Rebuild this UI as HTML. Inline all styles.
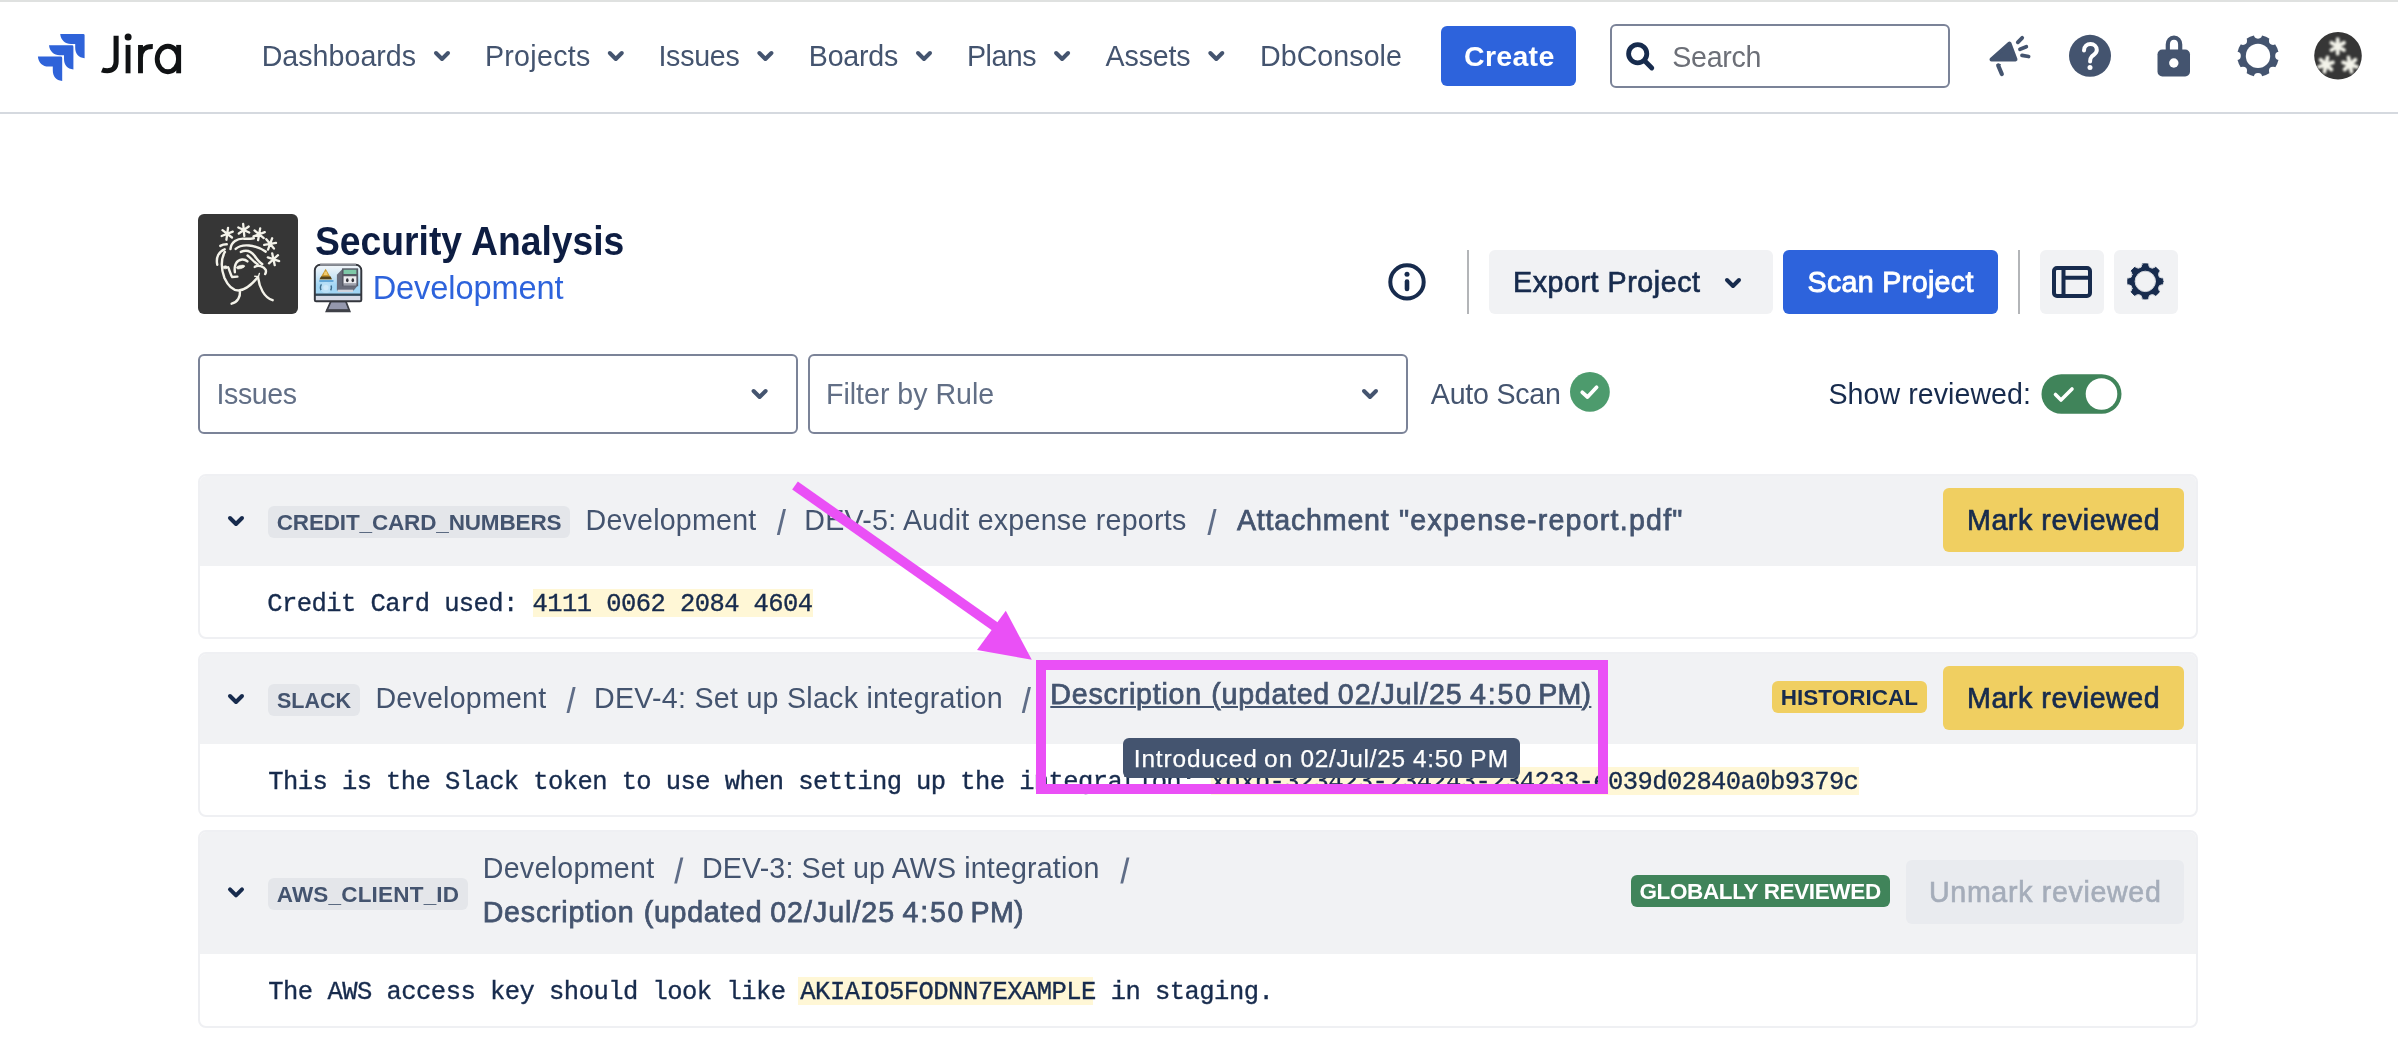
<!DOCTYPE html>
<html><head><meta charset="utf-8"><title>Security Analysis - Jira</title>
<style>
*{box-sizing:border-box;margin:0;padding:0}
html,body{width:2398px;height:1038px;overflow:hidden;background:#fff}
body{position:relative;font-family:"Liberation Sans",sans-serif;color:#172b4d}
.a{position:absolute}
.t{position:absolute;white-space:pre;line-height:1;font-size:28px;color:#44546f}
svg{position:absolute;left:0;top:0;overflow:visible}
</style></head><body>
<div id="root" style="position:absolute;left:0;top:0;width:2398px;height:1038px;will-change:transform">
<div class="a" style="left:0;top:0;width:2398px;height:2px;background:#dfe1e0"></div>
<div class="a" style="left:0;top:112px;width:2398px;height:2px;background:#d5d9df"></div>
<svg style="left:37px;top:33.600px" width="48" height="48" viewBox="0 0 48 48"><g fill="#2f63d9">
<path d="M23.2 0H46.3Q47.6 0 47.6 1.3V24.2C41.5 23.6 38.2 19.6 38.2 13.5V9.9H34.0C28.0 9.9 23.9 6.2 23.2 0Z"/>
<path d="M12.0 11.3H35.0Q36.4 11.3 36.4 12.7V35.5C30.3 34.9 27.0 30.9 27.0 24.8V21.2H22.8C16.8 21.2 12.7 17.5 12.0 11.3Z"/>
<path d="M0.9 22.5H23.8Q25.2 22.5 25.2 23.9V46.9C19.1 46.3 15.8 42.3 15.8 36.2V32.6H11.6C5.6 32.6 1.5 28.9 0.9 22.5Z"/></g></svg>
<svg width="200" height="114" fill="none" stroke="#101214" stroke-width="4.900">
<path d="M116.100 35.700V61.500C116.100 67.800 112.600 70.750 107.300 70.750C105.400 70.750 103.400 70.450 102 69.850" stroke-width="5.100"/>
<path d="M128.050 44.900V73.300"/><circle cx="128.100" cy="37.100" r="3.500" fill="#101214" stroke="none"/>
<path d="M140.500 44.900V73.300M140.500 58C140.500 50.200 145 46.300 152.800 46.500"/>
<ellipse cx="167.900" cy="59" rx="10.700" ry="12.700"/><path d="M178.650 44.900V73.300"/></svg>
<svg width="2398" height="114" fill="none" stroke-linecap="round" stroke-linejoin="round"><path d="M436 53.0l6 6l6 -6" stroke="#44546f" stroke-width="4"/><path d="M609.8 53.0l6 6l6 -6" stroke="#44546f" stroke-width="4"/><path d="M759.4 53.0l6 6l6 -6" stroke="#44546f" stroke-width="4"/><path d="M918 53.0l6 6l6 -6" stroke="#44546f" stroke-width="4"/><path d="M1056.1 53.0l6 6l6 -6" stroke="#44546f" stroke-width="4"/><path d="M1210.3 53.0l6 6l6 -6" stroke="#44546f" stroke-width="4"/></svg>
<div class="a" style="left:1441px;top:26px;width:135px;height:60px;background:#2d63dc;border-radius:6px;"></div>
<div class="a" style="left:1610px;top:24px;width:340px;height:64px;border:2px solid #7b8398;border-radius:6px;background:#fff"></div>
<svg style="left:1624px;top:40px" width="32" height="32" viewBox="0 0 32 32" fill="none" stroke="#172b4d" stroke-width="4.8" stroke-linecap="round"><circle cx="13.7" cy="13.7" r="9.1"/><path d="M20.6 20.8L27.8 28"/></svg>
<svg width="2398" height="114">
<g fill="#44546f" stroke="#44546f" stroke-linejoin="round" stroke-linecap="round">
<path d="M1991.500 59.500L2009.500 43.500L2015.500 59.500Z" stroke-width="4"/>
<path d="M1998.200 65.500L2001.800 74" stroke-width="4.200" fill="none"/>
<path d="M2017.800 42.300L2022.200 37.800M2020 49.200L2026.300 46.800M2022 55.300L2028.600 56.500" stroke-width="3.800" fill="none"/>
<path d="M1996.500 64h4.500l-1 2z" stroke="none"/></g>
<circle cx="2090" cy="55.800" r="21" fill="#44546f"/>
<path d="M2084 50.500C2084 46.500 2087 44 2090.500 44C2094 44 2096.800 46.500 2096.800 50C2096.800 53.500 2093.800 54.500 2091.500 56.800C2090.300 58 2090.100 59.500 2090.100 61.500" fill="none" stroke="#fff" stroke-width="4" stroke-linecap="round"/>
<circle cx="2090" cy="67.500" r="2.500" fill="#fff"/>
<rect x="2157.500" y="49.500" width="32.500" height="27" rx="4.800" fill="#44546f"/>
<path d="M2167.800 52V44.500C2167.800 40.500 2170.300 37.600 2174 37.600C2177.700 37.600 2180.200 40.500 2180.200 44.500V52" fill="none" stroke="#44546f" stroke-width="4.200"/>
<circle cx="2173.800" cy="63" r="4.700" fill="#fff"/>
<mask id="gm1" maskUnits="userSpaceOnUse" x="2235.2" y="33.099999999999994" width="45.6" height="45.6"><rect x="2235.2" y="33.099999999999994" width="45.6" height="45.6" fill="#fff"/><circle cx="2258" cy="55.9" r="12.2" fill="#000"/><circle cx="2258.00" cy="34.60" r="4.1" fill="#000"/><circle cx="2273.06" cy="40.84" r="4.1" fill="#000"/><circle cx="2279.30" cy="55.90" r="4.1" fill="#000"/><circle cx="2273.06" cy="70.96" r="4.1" fill="#000"/><circle cx="2258.00" cy="77.20" r="4.1" fill="#000"/><circle cx="2242.94" cy="70.96" r="4.1" fill="#000"/><circle cx="2236.70" cy="55.90" r="4.1" fill="#000"/><circle cx="2242.94" cy="40.84" r="4.1" fill="#000"/></mask><circle cx="2258" cy="55.9" r="20.8" fill="#44546f" mask="url(#gm1)"/>
<clipPath id="avc"><circle cx="2338" cy="55.800" r="23.800"/></clipPath>
<circle cx="2338" cy="55.800" r="23.800" fill="#363636"/>
<g clip-path="url(#avc)"><path d="M2337.70 53.70L2337.70 39.10M2331.38 50.05L2344.02 42.75M2331.38 42.75L2344.02 50.05M2324.48 71.74L2327.52 57.46M2319.06 66.86L2332.94 62.34M2320.58 59.72L2331.42 69.48M2351.52 71.74L2348.48 57.46M2344.58 69.48L2355.42 59.72M2343.06 62.34L2356.94 66.86" stroke="#f3f3ea" stroke-width="3.800" stroke-linecap="round" fill="none" style="filter:blur(0.8px)"/></g>
</svg>
<div class="a" style="left:198px;top:214px;width:100px;height:100px;background:#363636;border-radius:6px;"></div>
<svg style="left:190px;top:204px" width="200" height="120" viewBox="0 0 1730 1038" fill="none" stroke="#f4f3ea" stroke-width="21" stroke-linecap="round" stroke-linejoin="round">
<path d="M315 309L329 207M274 277L370 239M281 226L363 290M470 277L460 173M422 255L508 195M418 203L512 247M589 313L607 211M549 280L647 244M558 229L638 295M675 394L711 296M642 354L744 336M660 305L726 385M733 529L711 427M683 513L761 443M673 462L771 494" stroke-width="20"/>
<path d="M262 362Q285 348 318 348"/>
<path d="M300 392C250 410 222 460 236 525"/>
<path d="M302 415C268 470 266 560 298 640C328 705 370 748 420 748C480 745 540 690 588 632"/>
<path d="M350 390C355 330 410 295 470 300C500 303 530 300 552 296"/>
<path d="M395 388C450 340 560 350 655 412"/>
<path d="M440 415C490 392 530 410 560 450C580 480 600 505 625 520"/>
<path d="M498 445C530 470 555 505 585 522"/>
<path d="M560 545C585 520 640 540 655 570C660 585 655 598 650 606"/>
<path d="M388 590C380 530 400 485 450 480C470 478 485 485 497 497"/>
<ellipse cx="437" cy="545" rx="36" ry="14" transform="rotate(-14 437 545)" fill="#f4f3ea" stroke-width="6"/>
<ellipse cx="306" cy="548" rx="20" ry="13" fill="#f4f3ea" stroke-width="6"/>
<path d="M330 548C345 580 350 610 365 632L410 628"/>
<path d="M432 760C435 800 415 850 360 862"/>
<path d="M588 632C600 720 640 810 715 832"/>
<path d="M560 625L592 628L600 600" stroke-width="12"/>
</svg>
<svg style="left:308px;top:258px" width="60" height="60" viewBox="0 0 1038 1038">
<defs><linearGradient id="scr" x1="0" y1="0" x2="0" y2="1"><stop offset="0" stop-color="#f4f7fa"/><stop offset="0.3" stop-color="#cfe7f6"/><stop offset="0.55" stop-color="#a3d6f4"/><stop offset="1" stop-color="#9fd4f3"/></linearGradient>
<clipPath id="scrc"><path d="M118 213A95 95 0 0 1 213 118H827A95 95 0 0 1 922 213V728Q922 750 900 750H140Q118 750 118 728Z"/></clipPath></defs>
<g style="filter:blur(5px)">
<path d="M395 750H655L722 925H318Z" fill="#9498ae" stroke="#3a3d45" stroke-width="30"/>
<rect x="318" y="885" width="404" height="48" fill="#3f4148"/>
<path d="M118 213A95 95 0 0 1 213 118H827A95 95 0 0 1 922 213V728Q922 750 900 750H140Q118 750 118 728Z" fill="url(#scr)"/>
<g clip-path="url(#scrc)">
<rect x="118" y="652" width="804" height="100" fill="#d6dae6"/>
<rect x="118" y="615" width="804" height="40" fill="#35495a"/>
<path d="M305 185L412 368H200Z" fill="#c9982e"/><path d="M200 368H412L392 322H226Z" fill="#55431a"/>
<path d="M288 235h36l18 60h-72z" fill="#f2cb6e"/>
<circle cx="310" cy="512" r="95" fill="#b9dff6" stroke="#3f6f8f" stroke-width="26" stroke-dasharray="105 193.500" stroke-dashoffset="-245"/>
<circle cx="310" cy="512" r="45" fill="#cfe9f9"/>
<path d="M195 398H440" stroke="#4a97cf" stroke-width="24"/>
<path d="M500 290L600 185H865V470L790 562H500Z" fill="#686c7a"/>
<rect x="515" y="548" width="265" height="42" fill="#d0d3dc"/>
<rect x="588" y="180" width="280" height="308" fill="#565965"/>
<rect x="615" y="203" width="222" height="74" fill="#7ec8a8"/>
<rect x="615" y="316" width="222" height="128" fill="#ececef"/>
<rect x="615" y="440" width="222" height="38" fill="#9fa2ad"/>
<ellipse cx="680" cy="385" rx="22" ry="36" fill="#35373f"/><ellipse cx="775" cy="385" rx="22" ry="36" fill="#35373f"/>
</g>
<path d="M118 213A95 95 0 0 1 213 118H827A95 95 0 0 1 922 213V728Q922 750 900 750H140Q118 750 118 728Z" fill="none" stroke="#33363d" stroke-width="34"/>
<path d="M210 118H830" stroke="#8d9099" stroke-width="34"/>
</g></svg>
<svg width="2398" height="340">
<circle cx="1407" cy="281.900" r="16.700" fill="none" stroke="#172b4d" stroke-width="4"/>
<circle cx="1407" cy="274.300" r="2.500" fill="#172b4d"/>
<path d="M1407 281.500V289" stroke="#172b4d" stroke-width="4.600" stroke-linecap="round"/>
</svg>
<div class="a" style="left:1467px;top:250px;width:2px;height:64px;background:#b3b5b8"></div>
<div class="a" style="left:1489px;top:250px;width:284px;height:64px;background:#f1f2f4;border-radius:6px;"></div>
<div class="a" style="left:1783px;top:250px;width:215px;height:64px;background:#2d63dc;border-radius:6px;"></div>
<div class="a" style="left:2018px;top:250px;width:2px;height:64px;background:#b3b5b8"></div>
<div class="a" style="left:2040px;top:250px;width:64px;height:64px;background:#f1f2f4;border-radius:6px;"></div>
<div class="a" style="left:2114px;top:250px;width:64px;height:64px;background:#f1f2f4;border-radius:6px;"></div>
<svg width="2398" height="340" fill="none" stroke="#172b4d" stroke-linecap="round" stroke-linejoin="round">
<path d="M1727 280.0l6 6l6 -6" stroke="#172b4d" stroke-width="4"/>
<rect x="2054" y="268" width="36" height="28" rx="3" stroke-width="4"/>
<path d="M2063.500 268V296M2063.500 277.700H2090" stroke-width="4" stroke-linecap="butt"/>
<mask id="gm2" maskUnits="userSpaceOnUse" x="2125.7000000000003" y="261.79999999999995" width="39.2" height="39.2"><rect x="2125.7000000000003" y="261.79999999999995" width="39.2" height="39.2" fill="#fff"/><circle cx="2145.3" cy="281.4" r="10.2" fill="#000"/><circle cx="2152.26" cy="264.59" r="3.6" fill="#000"/><circle cx="2162.11" cy="274.44" r="3.6" fill="#000"/><circle cx="2162.11" cy="288.36" r="3.6" fill="#000"/><circle cx="2152.26" cy="298.21" r="3.6" fill="#000"/><circle cx="2138.34" cy="298.21" r="3.6" fill="#000"/><circle cx="2128.49" cy="288.36" r="3.6" fill="#000"/><circle cx="2128.49" cy="274.44" r="3.6" fill="#000"/><circle cx="2138.34" cy="264.59" r="3.6" fill="#000"/></mask><circle cx="2145.3" cy="281.4" r="17.6" fill="#172b4d" mask="url(#gm2)"/>
</svg>
<div class="a" style="left:198px;top:354px;width:600px;height:80px;border:2px solid #7b8398;border-radius:6px;background:#fff"></div>
<div class="a" style="left:808px;top:354px;width:600px;height:80px;border:2px solid #7b8398;border-radius:6px;background:#fff"></div>
<svg width="2398" height="460" fill="none" stroke-linecap="round" stroke-linejoin="round">
<path d="M753.6 391.0l6 6l6 -6" stroke="#44546f" stroke-width="4"/><path d="M1364 391.0l6 6l6 -6" stroke="#44546f" stroke-width="4"/>
<circle cx="1589.900" cy="391.900" r="19.900" fill="#4d9b6d"/>
<path d="M1582.300 392.300L1587.500 397L1596.600 387.300" stroke="#fff" stroke-width="3.800"/>
<rect x="2041.500" y="374.200" width="80" height="39.600" rx="19.800" fill="#40845a"/>
<circle cx="2101.500" cy="394" r="15.800" fill="#fff"/>
<path d="M2055.500 394.500L2061 400L2072 389" stroke="#fff" stroke-width="3.600"/>
</svg>
<div class="a" style="left:198px;top:474px;width:2000px;height:165px;border:2px solid #eff0f3;border-radius:8px;background:#fff;overflow:hidden"><div style="position:absolute;left:-2px;top:-2px;width:2000px;height:92px;background:#f1f2f4"></div></div>
<div class="a" style="left:198px;top:652px;width:2000px;height:165px;border:2px solid #eff0f3;border-radius:8px;background:#fff;overflow:hidden"><div style="position:absolute;left:-2px;top:-2px;width:2000px;height:92px;background:#f1f2f4"></div></div>
<div class="a" style="left:198px;top:830px;width:2000px;height:198px;border:2px solid #eff0f3;border-radius:8px;background:#fff;overflow:hidden"><div style="position:absolute;left:-2px;top:-2px;width:2000px;height:124px;background:#f1f2f4"></div></div>
<svg width="2398" height="1038" fill="none" stroke-linecap="round" stroke-linejoin="round"><path d="M230 518.0l6 6l6 -6" stroke="#172b4d" stroke-width="4"/><path d="M230 696.0l6 6l6 -6" stroke="#172b4d" stroke-width="4"/><path d="M230 889.4l6 6l6 -6" stroke="#172b4d" stroke-width="4"/></svg>
<div class="a" style="left:268px;top:506px;width:302px;height:32px;background:#e4e6ea;border-radius:6px;"></div>
<div class="a" style="left:1943px;top:488px;width:241px;height:64px;background:#f0cf61;border-radius:6px;"></div>
<div class="a" style="left:533.1px;top:588.6px;width:279.9px;height:28.600px;background:#fff7d6"></div>
<div class="a" style="left:268px;top:684px;width:92px;height:32px;background:#e4e6ea;border-radius:6px;"></div>
<div class="a" style="left:1772px;top:681px;width:155px;height:32px;background:#f0cf61;border-radius:6px;"></div>
<div class="a" style="left:1943px;top:666px;width:241px;height:64px;background:#f0cf61;border-radius:6px;"></div>
<div class="a" style="left:1210.7px;top:766.6px;width:648.1px;height:28.600px;background:#fff7d6"></div>
<div class="a" style="left:268px;top:878px;width:200px;height:32px;background:#e4e6ea;border-radius:6px;"></div>
<div class="a" style="left:1631px;top:875px;width:259px;height:32px;background:#40845a;border-radius:6px;"></div>
<div class="a" style="left:1906px;top:860px;width:278px;height:64px;background:#e9ebef;border-radius:6px;"></div>
<div class="a" style="left:798.3px;top:976.6px;width:294.6px;height:28.600px;background:#fff7d6"></div>
<svg width="2398" height="1038" fill="#5f6d87"><path d="M783.10 509.00h2.900L779.70 535.00h-2.850Z"/><path d="M1213.65 509.00h2.900L1210.25 535.00h-2.850Z"/><path d="M572.75 687.10h2.900L569.35 713.10h-2.850Z"/><path d="M1028.05 686.90h2.900L1024.65 712.90h-2.850Z"/><path d="M680.45 857.60h2.900L677.05 883.60h-2.850Z"/><path d="M1126.55 857.60h2.900L1123.15 883.60h-2.850Z"/></svg>
<div class="t" style="left:261.70px;top:42.00px;font-size:28.6px;color:#44546f;letter-spacing:0.024px;">Dashboards</div>
<div class="t" style="left:484.90px;top:42.00px;font-size:28.6px;color:#44546f;letter-spacing:0.315px;">Projects</div>
<div class="t" style="left:658.40px;top:42.00px;font-size:28.6px;color:#44546f;letter-spacing:-0.249px;">Issues</div>
<div class="t" style="left:808.80px;top:42.00px;font-size:28.6px;color:#44546f;letter-spacing:-0.220px;">Boards</div>
<div class="t" style="left:967.00px;top:42.00px;font-size:28.6px;color:#44546f;letter-spacing:-0.507px;">Plans</div>
<div class="t" style="left:1105.60px;top:42.00px;font-size:28.6px;color:#44546f;letter-spacing:-0.162px;">Assets</div>
<div class="t" style="left:1260.00px;top:42.00px;font-size:28.6px;color:#44546f;letter-spacing:0.055px;">DbConsole</div>
<div class="t" style="left:1464.00px;top:42.00px;font-size:28.5px;color:#fff;letter-spacing:0.307px;font-weight:bold;">Create</div>
<div class="t" style="left:1672.20px;top:43.00px;font-size:28.6px;color:#6c6f77;letter-spacing:-0.259px;">Search</div>
<div class="t" style="left:315.09px;top:221.00px;font-size:41px;color:#0d1d42;letter-spacing:0.000px;font-weight:bold;transform:scaleX(0.9087);transform-origin:0 0;">Security Analysis</div>
<div class="t" style="left:372.70px;top:272.00px;font-size:32.6px;color:#2d63dc;letter-spacing:-0.110px;">Development</div>
<div class="t" style="left:1513.00px;top:268.00px;font-size:28.6px;color:#172b4d;letter-spacing:0.567px;-webkit-text-stroke:0.7px #172b4d;">Export Project</div>
<div class="t" style="left:1807.50px;top:268.00px;font-size:28.6px;color:#fff;letter-spacing:0.349px;-webkit-text-stroke:0.9px #fff;">Scan Project</div>
<div class="t" style="left:216.50px;top:380.00px;font-size:28.6px;color:#626f86;letter-spacing:-0.409px;">Issues</div>
<div class="t" style="left:826.00px;top:380.00px;font-size:28.6px;color:#626f86;letter-spacing:-0.018px;">Filter by Rule</div>
<div class="t" style="left:1430.80px;top:380.00px;font-size:28.6px;color:#44546f;letter-spacing:-0.230px;">Auto Scan</div>
<div class="t" style="left:1828.50px;top:380.00px;font-size:28.6px;color:#172b4d;letter-spacing:0.046px;">Show reviewed:</div>
<div class="t" style="left:276.70px;top:512.00px;font-size:22.5px;color:#44546f;letter-spacing:-0.151px;font-weight:bold;">CREDIT_CARD_NUMBERS</div>
<div class="t" style="left:585.50px;top:506.00px;font-size:28.6px;color:#44546f;letter-spacing:0.227px;">Development</div>
<div class="t" style="left:804.30px;top:506.00px;font-size:28.6px;color:#44546f;letter-spacing:0.252px;">DEV-5: Audit expense reports</div>
<div class="t" style="left:1237.00px;top:506.00px;font-size:28.6px;color:#44546f;letter-spacing:0.790px;-webkit-text-stroke:0.75px #44546f;">Attachment</div>
<div class="t" style="left:1399.00px;top:506.00px;font-size:28.6px;color:#44546f;letter-spacing:1.218px;-webkit-text-stroke:0.75px #44546f;">"expense-report.pdf"</div>
<div class="t" style="left:1967.00px;top:506.00px;font-size:28.6px;color:#172b4d;letter-spacing:0.566px;-webkit-text-stroke:0.7px #172b4d;">Mark reviewed</div>
<div class="t" style="left:267.30px;top:592.00px;font-size:25.5px;color:#172b4d;letter-spacing:-0.566px;font-family:'Liberation Mono',monospace;-webkit-text-stroke:0.35px #172b4d;">Credit Card used: 4111 0062 2084 4604</div>
<div class="t" style="left:276.70px;top:690.00px;font-size:22.5px;color:#44546f;letter-spacing:0.000px;font-weight:bold;transform:scaleX(0.9559);transform-origin:0 0;">SLACK</div>
<div class="t" style="left:375.40px;top:684.00px;font-size:28.6px;color:#44546f;letter-spacing:0.227px;">Development</div>
<div class="t" style="left:594.00px;top:684.00px;font-size:28.6px;color:#44546f;letter-spacing:0.272px;">DEV-4: Set up Slack integration</div>
<div class="t" style="left:1780.80px;top:687.00px;font-size:22.5px;color:#172b4d;letter-spacing:0.006px;font-weight:bold;">HISTORICAL</div>
<div class="t" style="left:1967.00px;top:684.00px;font-size:28.6px;color:#172b4d;letter-spacing:0.566px;-webkit-text-stroke:0.7px #172b4d;">Mark reviewed</div>
<div class="t" style="left:268.30px;top:770.00px;font-size:25.5px;color:#172b4d;letter-spacing:-0.580px;font-family:'Liberation Mono',monospace;-webkit-text-stroke:0.35px #172b4d;">This is the Slack token to use when setting up the integration: xoxb-323423-234243-234233-e039d02840a0b9379c</div>
<div class="t" style="left:276.70px;top:884.00px;font-size:22.5px;color:#44546f;letter-spacing:0.194px;font-weight:bold;">AWS_CLIENT_ID</div>
<div class="t" style="left:482.70px;top:854.00px;font-size:28.6px;color:#44546f;letter-spacing:0.307px;">Development</div>
<div class="t" style="left:702.00px;top:854.00px;font-size:28.6px;color:#44546f;letter-spacing:0.151px;">DEV-3: Set up AWS integration</div>
<div class="t" style="left:482.70px;top:898.00px;font-size:28.6px;color:#44546f;letter-spacing:0.788px;-webkit-text-stroke:0.75px #44546f;">Description</div>
<div class="t" style="left:643.70px;top:898.00px;font-size:28.6px;color:#44546f;letter-spacing:0.717px;-webkit-text-stroke:0.75px #44546f;">(updated</div>
<div class="t" style="left:770.20px;top:898.00px;font-size:28.6px;color:#44546f;letter-spacing:0.982px;-webkit-text-stroke:0.75px #44546f;">02/Jul/25</div>
<div class="t" style="left:902.50px;top:898.00px;font-size:28.6px;color:#44546f;letter-spacing:1.784px;-webkit-text-stroke:0.75px #44546f;">4:50</div>
<div class="t" style="left:970.60px;top:898.00px;font-size:28.6px;color:#44546f;letter-spacing:0.255px;-webkit-text-stroke:0.75px #44546f;">PM)</div>
<div class="t" style="left:1639.40px;top:881.00px;font-size:22.5px;color:#fff;letter-spacing:-0.362px;font-weight:bold;">GLOBALLY REVIEWED</div>
<div class="t" style="left:1929.00px;top:878.00px;font-size:28.6px;color:#a5adba;letter-spacing:0.667px;-webkit-text-stroke:0.6px #a5adba;">Unmark reviewed</div>
<div class="t" style="left:268.30px;top:980.00px;font-size:25.5px;color:#172b4d;letter-spacing:-0.524px;font-family:'Liberation Mono',monospace;-webkit-text-stroke:0.35px #172b4d;">The AWS access key should look like AKIAIO5FODNN7EXAMPLE in staging.</div>
<div class="a" style="left:1041px;top:665px;width:562px;height:124px;overflow:hidden;background:#fff"><div class="a" style="left:-1041px;top:-665px;width:2398px;height:1038px"><div class="a" style="left:1041px;top:665px;width:562px;height:79px;background:#f1f2f4;border-radius:0px;"></div><div class="a" style="left:1210.7px;top:766.6px;width:648.1px;height:28.600px;background:#fff7d6"></div>
<div class="a" style="left:1198.8px;top:706.00px;width:15.0px;height:2.200px;background:#44546f"></div>
<div class="a" style="left:1326.8px;top:706.00px;width:13.5px;height:2.200px;background:#44546f"></div>
<div class="a" style="left:1459.3px;top:706.00px;width:12.3px;height:2.200px;background:#44546f"></div>
<div class="a" style="left:1528.7px;top:706.00px;width:13.0px;height:2.200px;background:#44546f"></div><div class="t" style="left:268.30px;top:770.00px;font-size:25.5px;color:#172b4d;letter-spacing:-0.580px;font-family:'Liberation Mono',monospace;-webkit-text-stroke:0.35px #172b4d;">This is the Slack token to use when setting up the integration: xoxb-323423-234243-234233-e039d02840a0b9379c</div>
<div class="t" style="left:1050.30px;top:680.00px;font-size:28.6px;color:#44546f;letter-spacing:0.788px;-webkit-text-stroke:0.75px #44546f;text-decoration:underline;text-decoration-thickness:2.200px;text-underline-offset:2px;">Description</div>
<div class="t" style="left:1211.30px;top:680.00px;font-size:28.6px;color:#44546f;letter-spacing:0.717px;-webkit-text-stroke:0.75px #44546f;text-decoration:underline;text-decoration-thickness:2.200px;text-underline-offset:2px;">(updated</div>
<div class="t" style="left:1337.80px;top:680.00px;font-size:28.6px;color:#44546f;letter-spacing:0.982px;-webkit-text-stroke:0.75px #44546f;text-decoration:underline;text-decoration-thickness:2.200px;text-underline-offset:2px;">02/Jul/25</div>
<div class="t" style="left:1470.10px;top:680.00px;font-size:28.6px;color:#44546f;letter-spacing:1.784px;-webkit-text-stroke:0.75px #44546f;text-decoration:underline;text-decoration-thickness:2.200px;text-underline-offset:2px;">4:50</div>
<div class="t" style="left:1538.20px;top:680.00px;font-size:28.6px;color:#44546f;letter-spacing:0.255px;-webkit-text-stroke:0.75px #44546f;text-decoration:underline;text-decoration-thickness:2.200px;text-underline-offset:2px;">PM)</div><div class="a" style="left:1123px;top:738px;width:397px;height:40px;background:#44546f;border-radius:6px;"></div><div class="t" style="left:1133.80px;top:747.00px;font-size:24.4px;color:#fff;letter-spacing:0.867px;-webkit-text-stroke:0.25px #fff;">Introduced</div>
<div class="t" style="left:1263.90px;top:747.00px;font-size:24.4px;color:#fff;letter-spacing:1.335px;-webkit-text-stroke:0.25px #fff;">on</div>
<div class="t" style="left:1300.40px;top:747.00px;font-size:24.4px;color:#fff;letter-spacing:0.697px;-webkit-text-stroke:0.25px #fff;">02/Jul/25</div>
<div class="t" style="left:1413.00px;top:747.00px;font-size:24.4px;color:#fff;letter-spacing:0.698px;-webkit-text-stroke:0.25px #fff;">4:50</div>
<div class="t" style="left:1470.30px;top:747.00px;font-size:24.4px;color:#fff;letter-spacing:1.232px;-webkit-text-stroke:0.25px #fff;">PM</div></div></div><svg width="2398" height="1038">
<rect x="1041" y="665" width="562" height="124" fill="none" stroke="#ea50f6" stroke-width="10"/>
<path d="M795 485.400L1000 630" stroke="#ea50f6" stroke-width="9.800" fill="none"/>
<path d="M1031.800 659.800L1005.800 610.800L977 650Z" fill="#ea50f6"/>
</svg>
</div>
</body></html>
